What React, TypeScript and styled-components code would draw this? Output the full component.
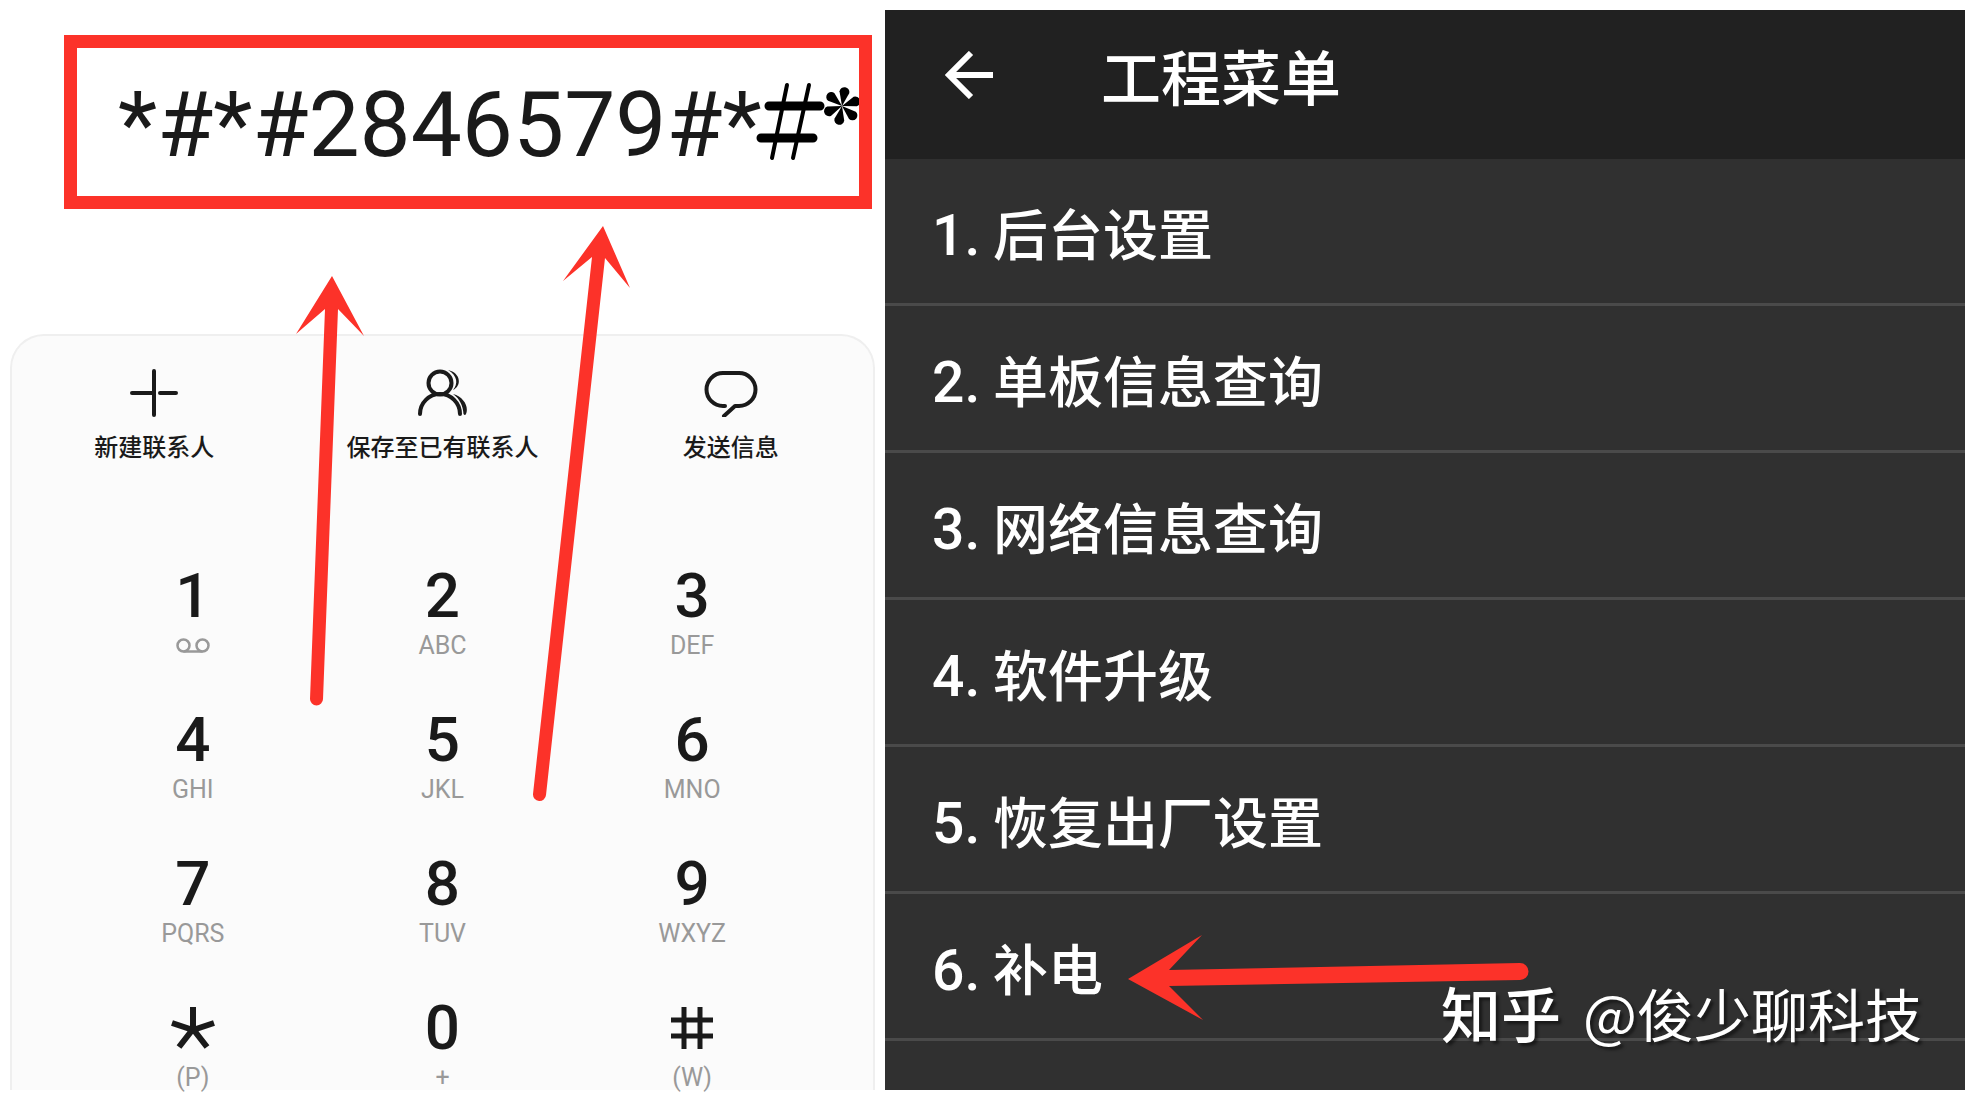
import React from "react";
import styled, { createGlobalStyle } from "styled-components";

const RED = "#fc3229";
const INK = "#1a1a1a";
const LATIN = `Roboto, "Noto Sans CJK SC", sans-serif`;

const GlobalStyle = createGlobalStyle`
  *, *::before, *::after { box-sizing: border-box; }
  body {
    margin: 0;
    background: #fff;
    font-family: "Noto Sans CJK SC", "Noto Sans", sans-serif;
  }
  button {
    border: 0;
    margin: 0;
    padding: 0;
    background: none;
    color: inherit;
    font: inherit;
    cursor: pointer;
  }
`;

const Stage = styled.main`
  display: grid;
  grid-template-columns: 865fr 1080fr;
  gap: 10px;
  min-height: 100vh;
  padding: 10px;
`;

const Dialer = styled.section`
  position: relative;
  display: flex;
  flex-direction: column;
  color: ${INK};
`;

const Display = styled.div`
  height: 324px;
  padding: 25px 3px 0 54px;
`;

const NumberFrame = styled.div`
  display: flex;
  align-items: center;
  height: 174px;
  padding: 5px 0 0 41px;
  border: 13px solid ${RED};
  overflow: hidden;
`;

const DialedNumber = styled.output`
  font-family: ${LATIN};
  font-size: 91px;
  line-height: 120px;
  font-weight: 400;
  white-space: nowrap;
`;

const Sheet = styled.div`
  flex: 1;
  padding-top: 33px;
  border: 2px solid #efefef;
  border-bottom: 0;
  border-radius: 34px 34px 0 0;
  background: #fbfbfb;
`;

const Actions = styled.div`
  display: grid;
  grid-template-columns: repeat(3, 1fr);
  column-gap: 4px;
`;

const Action = styled.button`
  display: flex;
  flex-direction: column;
  align-items: center;
  gap: 11px;
  font-size: 24px;
  line-height: 36px;
  font-weight: 500;
  white-space: nowrap;
`;

const Keypad = styled.div`
  display: grid;
  grid-template-columns: repeat(3, 1fr);
  padding: 97px 56px 0;
  font-family: ${LATIN};
`;

const Key = styled.button`
  display: flex;
  flex-direction: column;
  align-items: center;
  height: 144px;

  &:nth-last-child(-n + 3) {
    height: 97px;
  }
`;

const Digit = styled.span`
  display: flex;
  flex: none;
  align-items: center;
  justify-content: center;
  height: 70px;
  font-size: 62px;
  line-height: 70px;
  font-weight: 500;
`;

const Letters = styled.span`
  display: flex;
  flex: none;
  align-items: center;
  height: 30px;
  color: #999;
  font-size: 25px;
  line-height: 30px;
  font-weight: 400;
`;

const Menu = styled.section`
  position: relative;
  background: #303030;
  color: #fff;
`;

const MenuHeader = styled.header`
  display: flex;
  align-items: center;
  gap: 108px;
  height: 149px;
  padding: 0 0 20px 60px;
  background: #212121;
`;

const BackButton = styled.button`
  display: flex;
`;

const Title = styled.h1`
  margin: 0;
  font-size: 60px;
  line-height: 80px;
  font-weight: 500;
`;

const MenuList = styled.ol`
  margin: 0;
  padding: 0;
  list-style: none;
`;

const MenuItem = styled.li`
  border-bottom: 3px solid #4a4a4a;
`;

const MenuButton = styled.button`
  display: block;
  width: 100%;
  height: 144px;
  padding: 4px 0 0 47px;
  font-size: 55px;
  line-height: 80px;
  font-weight: 500;
  text-align: left;
  white-space: nowrap;
`;

const Index = styled.span`
  display: inline-block;
  width: 61px;
  font-family: ${LATIN};
  font-size: 57px;
`;

const Annotations = styled.svg`
  position: absolute;
  inset: 0;
  width: 100%;
  height: 100%;
  pointer-events: none;
`;

const Watermark = styled.div`
  position: absolute;
  right: 43px;
  bottom: 38px;
  display: flex;
  align-items: center;
  gap: 22px;
  font-size: 57px;
  line-height: 80px;
  text-shadow: 3px 3px 3px rgba(0, 0, 0, 0.5);
  white-space: nowrap;
  pointer-events: none;
`;

const Brand = styled.span`
  font-size: 60px;
  font-weight: 500;
`;

const Handle = styled.span`
  font-weight: 400;
`;

const PlusIcon = () => (
  <svg width="48" height="48" viewBox="0 0 48 48" fill="none" stroke={INK} strokeWidth="4" strokeLinecap="round" aria-hidden="true">
    <path d="M24 2V46M2 24H22M30 24H46" />
  </svg>
);

const PeopleIcon = () => (
  <svg width="50" height="48" viewBox="0 0 50 48" fill="none" stroke={INK} strokeWidth="4" strokeLinecap="round" aria-hidden="true">
    <circle cx="23" cy="14" r="11.5" />
    <path d="M3 45A20 20 0 0 1 43 45" />
    <g fill={INK} stroke="none">
      <path d="M31 1C44 4 45 17 36 21C41 15 41 7 31 1Z" />
      <path d="M36 25C47 28 52 38 49 45Q48 47 46.5 45C46 37 43 30 36 25Z" />
    </g>
  </svg>
);

const MessageIcon = () => (
  <svg width="54" height="48" viewBox="0 0 54 48" fill="none" stroke={INK} strokeWidth="4" strokeLinecap="round" strokeLinejoin="round" aria-hidden="true">
    <path d="M21 37H19A16.5 16.5 0 0 1 19 4H35A16.5 16.5 0 0 1 35 37H31L20 47" />
  </svg>
);

const VoicemailIcon = () => (
  <svg width="34" height="16" viewBox="0 0 34 16" fill="none" stroke="#999" strokeWidth="2.5" aria-hidden="true">
    <circle cx="7.5" cy="7.5" r="6" />
    <circle cx="26.5" cy="7.5" r="6" />
    <path d="M7.5 13.5H26.5" />
  </svg>
);

const StarIcon = () => (
  <svg width="44" height="42" viewBox="0 0 44 42" fill="none" stroke={INK} strokeWidth="6" aria-hidden="true">
    <path d="M22 24V0M22 23L1 16M22 23L43 16M22 22L8 40M22 22L36 40" />
  </svg>
);

const HashIcon = () => (
  <svg width="42" height="42" viewBox="0 0 42 42" fill="none" stroke={INK} strokeWidth="5" aria-hidden="true">
    <path d="M13 0V42M29 0V42M0 13H42M0 29H42" />
  </svg>
);

const BackIcon = () => (
  <svg width="48" height="48" viewBox="0 0 48 48" fill="none" stroke="#fff" strokeWidth="6" aria-hidden="true">
    <path d="M48 24H4M26 2L4 24L26 46" />
  </svg>
);

type KeyDef = { id: string; face: React.ReactNode; sub: React.ReactNode };

const KEYS: KeyDef[] = [
  { id: "1", face: "1", sub: <VoicemailIcon /> },
  { id: "2", face: "2", sub: "ABC" },
  { id: "3", face: "3", sub: "DEF" },
  { id: "4", face: "4", sub: "GHI" },
  { id: "5", face: "5", sub: "JKL" },
  { id: "6", face: "6", sub: "MNO" },
  { id: "7", face: "7", sub: "PQRS" },
  { id: "8", face: "8", sub: "TUV" },
  { id: "9", face: "9", sub: "WXYZ" },
  { id: "*", face: <StarIcon />, sub: "(P)" },
  { id: "0", face: "0", sub: "+" },
  { id: "#", face: <HashIcon />, sub: "(W)" },
];

const ACTIONS = [
  { label: "新建联系人", icon: <PlusIcon /> },
  { label: "保存至已有联系人", icon: <PeopleIcon /> },
  { label: "发送信息", icon: <MessageIcon /> },
];

const MENU = ["后台设置", "单板信息查询", "网络信息查询", "软件升级", "恢复出厂设置", "补电"];

const PETALS = [10, 71, 132, 191, 248, 310];

export default function App() {
  return (
    <>
      <GlobalStyle />
      <Stage>
        <Dialer>
          <Display>
            <NumberFrame>
              <DialedNumber>*#*#2846579#*</DialedNumber>
            </NumberFrame>
          </Display>
          <Sheet>
            <Actions>
              {ACTIONS.map((a) => (
                <Action key={a.label} type="button">
                  {a.icon}
                  {a.label}
                </Action>
              ))}
            </Actions>
            <Keypad>
              {KEYS.map((k) => (
                <Key key={k.id} type="button" aria-label={k.id}>
                  <Digit>{k.face}</Digit>
                  <Letters>{k.sub}</Letters>
                </Key>
              ))}
            </Keypad>
          </Sheet>
          <Annotations viewBox="0 0 865 1080" preserveAspectRatio="xMidYMin meet" aria-hidden="true">
            <g stroke="#000" strokeLinecap="round">
              <path d="M777 75L762 148M799 75L783 148" strokeWidth="4" />
              <path d="M759 96H810M751 128H803" strokeWidth="9" />
            </g>
            <g transform="translate(832 96)">
              {PETALS.map((angle) => (
                <path key={angle} d="M0 0L-5 -14A5 5 0 1 1 5 -14Z" transform={`rotate(${angle})`} />
              ))}
            </g>
            <g fill={RED}>
              <path d="M849 70H862V130H849Z" />
              <path d="M322 266L354 326L328 299L313 689A6 6 0 0 1 300 689L315 299L286 324Z" />
              <path d="M593 216L620 278L595 248L536 785A6 6 0 0 1 523 784L582 247L553 271Z" />
            </g>
          </Annotations>
        </Dialer>
        <Menu>
          <MenuHeader>
            <BackButton type="button" aria-label="返回">
              <BackIcon />
            </BackButton>
            <Title>工程菜单</Title>
          </MenuHeader>
          <MenuList>
            {MENU.map((label, i) => (
              <MenuItem key={label}>
                <MenuButton type="button">
                  <Index>{i + 1}.</Index>
                  {label}
                </MenuButton>
              </MenuItem>
            ))}
          </MenuList>
          <Annotations viewBox="0 0 1080 1080" preserveAspectRatio="xMinYMin meet" aria-hidden="true">
            <path fill={RED} d="M243 969L317 925L284 960L635 953A8 8 0 0 1 635 970L284 976L318 1010Z" />
          </Annotations>
          <Watermark>
            <Brand>知乎</Brand>
            <Handle>@俊少聊科技</Handle>
          </Watermark>
        </Menu>
      </Stage>
    </>
  );
}
